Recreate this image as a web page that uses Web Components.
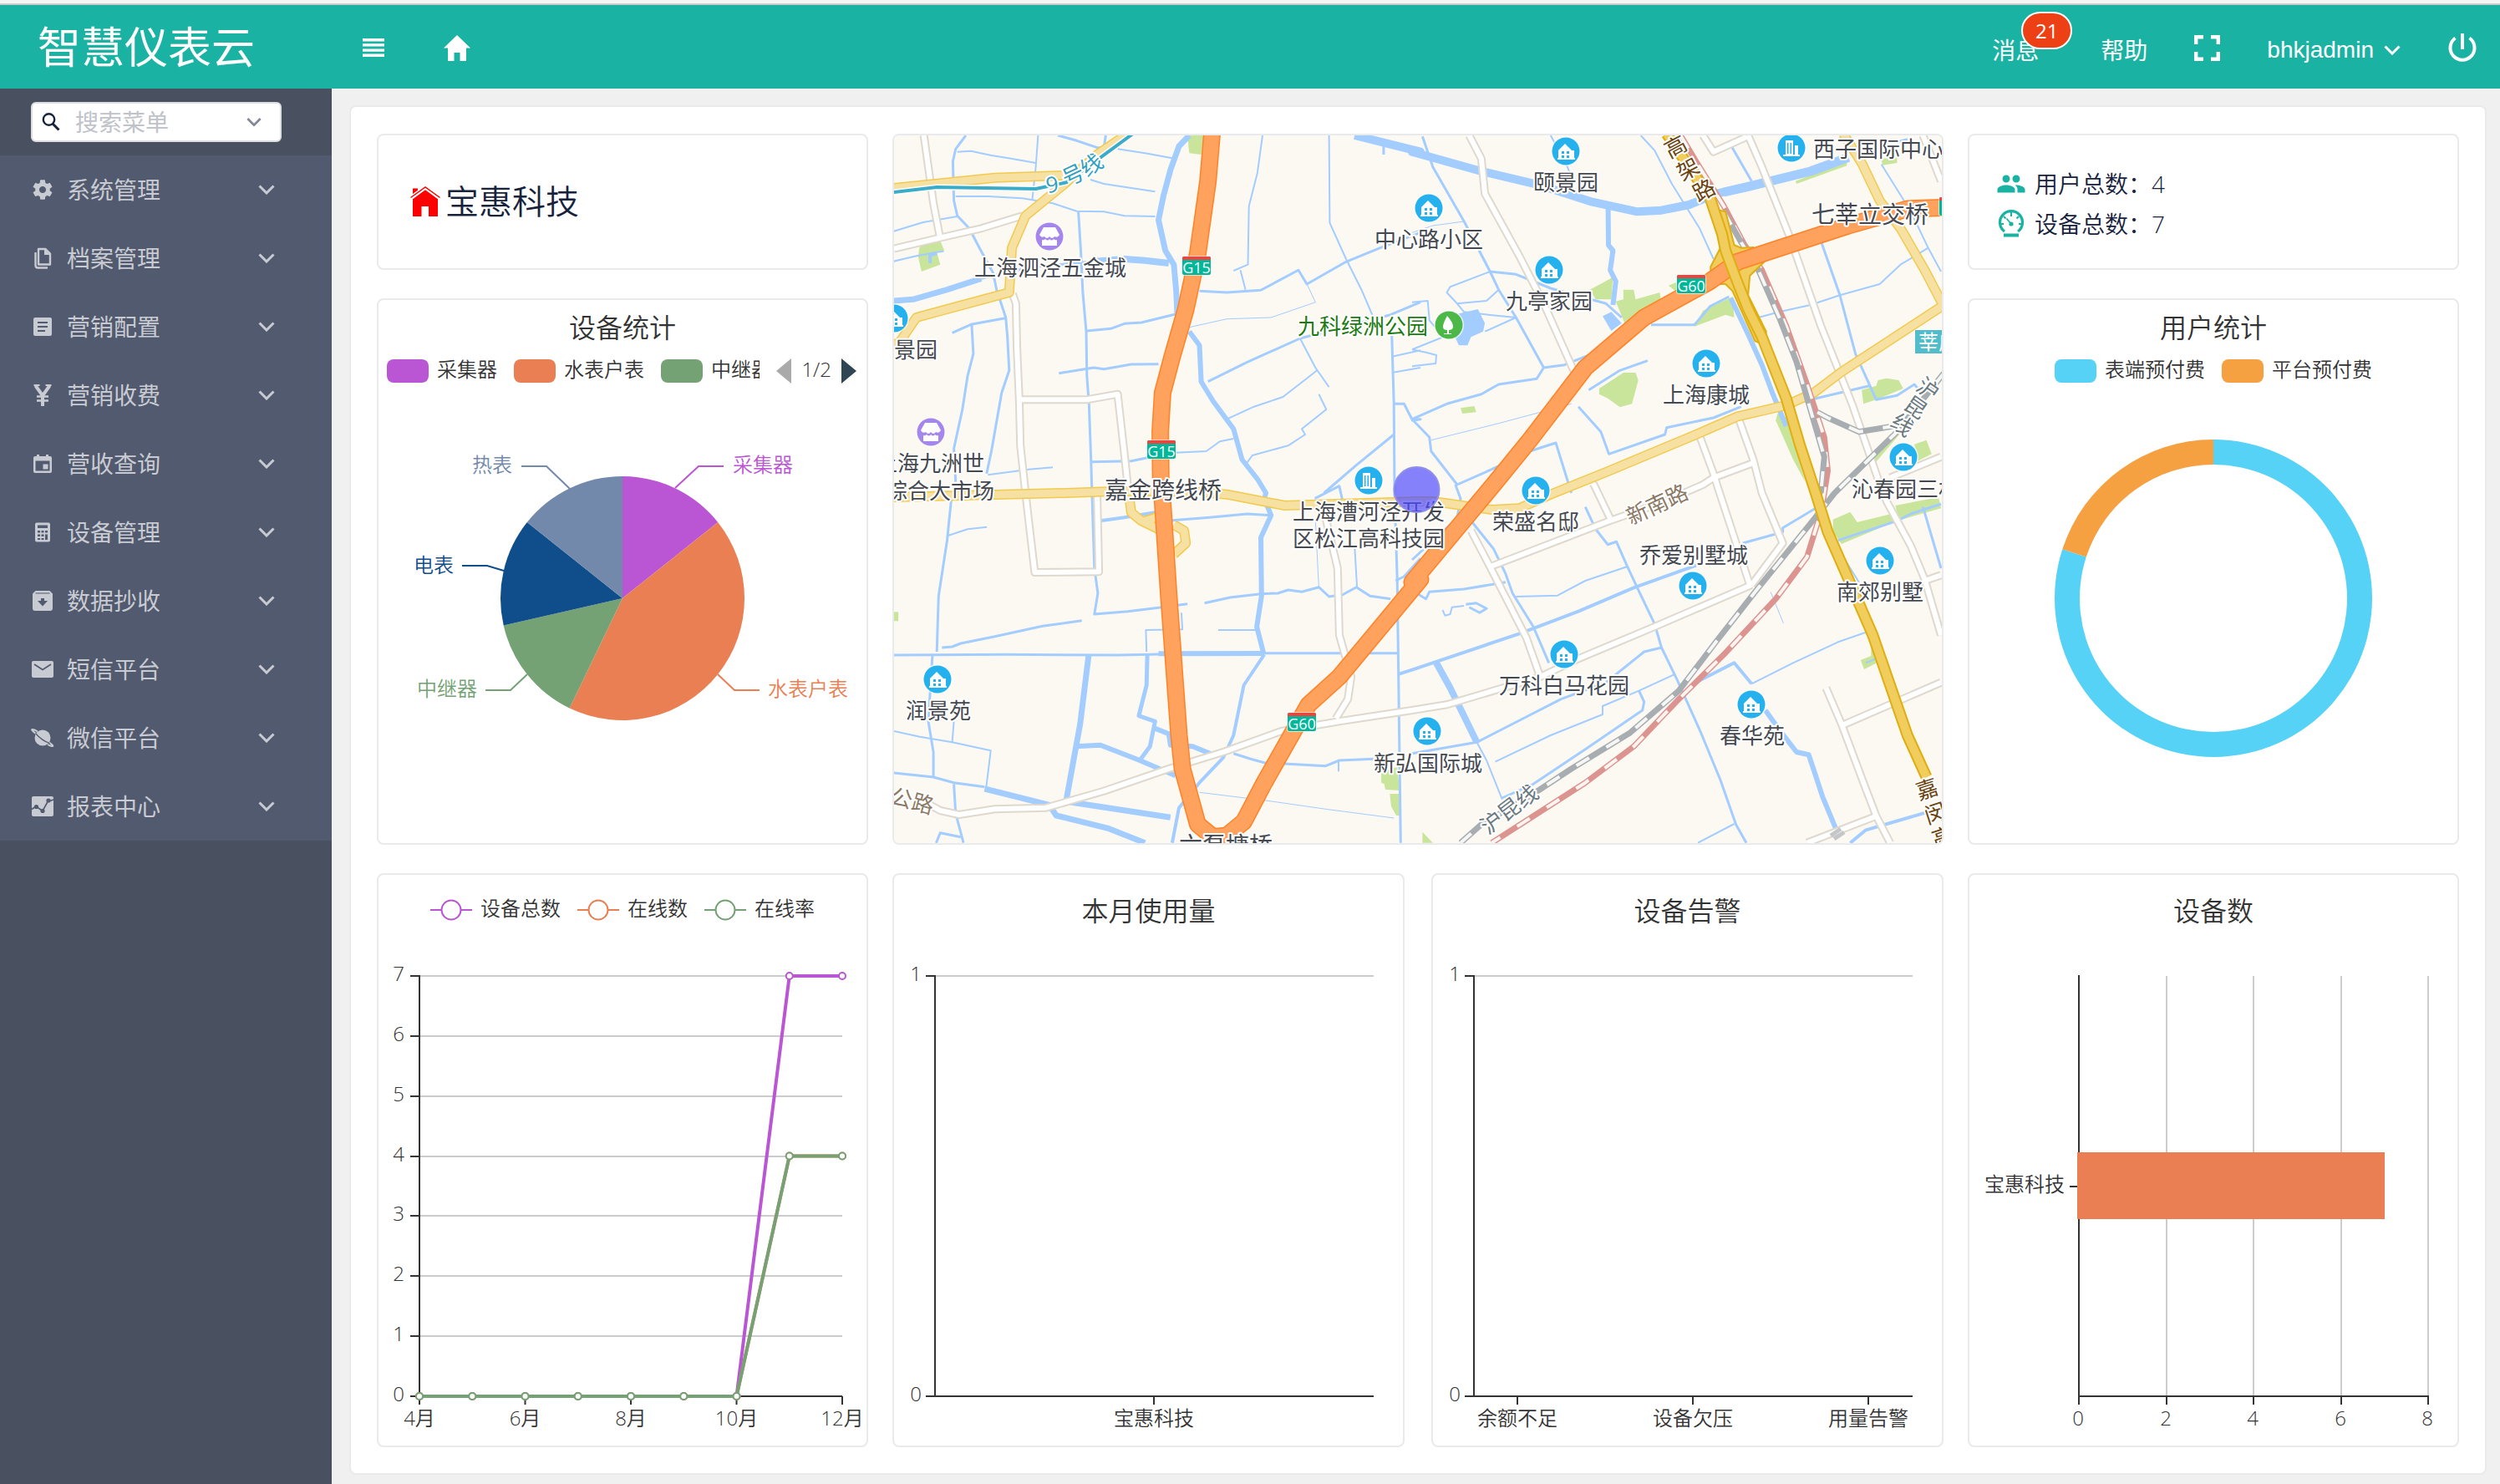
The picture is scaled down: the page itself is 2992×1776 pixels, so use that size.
<!DOCTYPE html>
<html lang="zh-CN">
<head>
<meta charset="utf-8">
<title>智慧仪表云</title>
<style>
  html, body { margin: 0; min-height: 100%; }
  body {
    background: #f0f0f0;
    color: #17233d;
    font-family: "Open Sans", "Noto Sans CJK SC", sans-serif;
    font-size: 28px;
    line-height: 40px;
  }
</style>
</head>
<body>
<meter-app></meter-app>

<script>
const define = (name, css, html, setup) => {
  const tpl = document.createElement('template');
  tpl.innerHTML = `<style>*{box-sizing:border-box}${css}</style>${html}`;
  customElements.define(name, class extends HTMLElement {
    constructor() {
      super();
      this.attachShadow({ mode: 'open' }).append(tpl.content.cloneNode(true));
    }
    connectedCallback() { if (setup) setup(this, this.shadowRoot); }
  });
};

/* ---------- icons ---------- */
const ICONS = {
  menu: ['0 0 26 22', '<path fill="currentColor" d="M0 0h26v3.4H0zM0 6.2h26v3.4H0zM0 12.4h26v3.4H0zM0 18.6h26V22H0z"/>'],
  home: ['0 0 32 31', '<path fill="currentColor" d="M16 0L32 15.5H27V31H19.5V21H12.5V31H5V15.5H0z"/>'],
  full: ['0 0 31 31', '<path fill="none" stroke="currentColor" stroke-width="4.4" d="M2.2 11V2.2H11M20 2.2h8.8V11M28.8 20v8.8H20M11 28.8H2.2V20"/>'],
  power: ['0 0 36 34', '<path fill="none" stroke="currentColor" stroke-width="4" d="M18 0v19"/><path fill="none" stroke="currentColor" stroke-width="4" d="M9.5 5.5A14.5 14.5 0 1 0 26.5 5.5"/>'],
  down: ['0 0 20 12', '<path fill="none" stroke="currentColor" stroke-width="3" d="M1.5 1.5L10 10L18.5 1.5"/>'],
  search: ['0 0 22 22', '<circle cx="8.5" cy="8" r="6.7" fill="none" stroke="currentColor" stroke-width="2.4"/><path d="M13 13L20.5 20.5" stroke="currentColor" stroke-width="3"/>'],
  gear: ['0 0 24 24', '<path fill="currentColor" d="M19.43 12.98c.04-.32.07-.64.07-.98s-.03-.66-.07-.98l2.11-1.65c.19-.15.24-.42.12-.64l-2-3.46c-.12-.22-.39-.3-.61-.22l-2.49 1c-.52-.4-1.08-.73-1.69-.98l-.38-2.65C14.46 2.18 14.25 2 14 2h-4c-.25 0-.46.18-.49.42l-.38 2.65c-.61.25-1.17.59-1.69.98l-2.49-1c-.23-.09-.49 0-.61.22l-2 3.46c-.13.22-.07.49.12.64l2.11 1.65c-.04.32-.07.65-.07.98s.03.66.07.98l-2.11 1.65c-.19.15-.24.42-.12.64l2 3.46c.12.22.39.3.61.22l2.49-1c.52.4 1.08.73 1.69.98l.38 2.65c.03.24.24.42.49.42h4c.25 0 .46-.18.49-.42l.38-2.65c.61-.25 1.17-.59 1.69-.98l2.49 1c.23.09.49 0 .61-.22l2-3.46c.12-.22.07-.49-.12-.64l-2.11-1.65zM12 15.5c-1.93 0-3.5-1.57-3.5-3.5s1.57-3.5 3.5-3.5 3.5 1.57 3.5 3.5-1.57 3.5-3.5 3.5z"/>'],
  copy: ['0 0 28 28', '<g fill="none" stroke="currentColor" stroke-width="2.4"><path d="M9 3h8.5L23 8.500v13H9z" stroke-linejoin="round"/><path d="M5.5 7v15.500q0 3 3 3H20"/></g><path fill="currentColor" d="M16 2.500l7.500 7.500H16z"/>'],
  article: ['0 0 28 28', '<path fill="currentColor" fill-rule="evenodd" d="M5 3h18q2 0 2 2v18q0 2-2 2H5q-2 0-2-2V5q0-2 2-2zM8 8v2h12V8zM8 13v2h12v-2zM8 18v2h9v-2z"/>'],
  yen: ['0 0 28 28', '<path fill="none" stroke="currentColor" stroke-width="4" d="M14 27V14M5.5 2.5L14 14.5L22.5 2.5"/><path fill="none" stroke="currentColor" stroke-width="2.6" d="M7 15.5h14M7 20.5h14"/><path stroke="currentColor" stroke-width="2" d="M3.5 2h7M17.5 2h7"/>'],
  calendar: ['0 0 28 28', '<path fill="currentColor" fill-rule="evenodd" d="M7 3h3v2h8V3h3v2h2q2 0 2 2v16q0 2-2 2H5q-2 0-2-2V7q0-2 2-2h2zM5.5 10.5v12h17v-12zM14.5 14.500h6v6h-6z"/>'],
  calc: ['0 0 28 28', '<path fill="currentColor" fill-rule="evenodd" d="M7 2.500h14q2 0 2 2v19q0 2-2 2H7q-2 0-2-2v-19q0-2 2-2zM8 5.500v3.500h12V5.500zM8 12v2.500h3V12zM12.500 12v2.500h3V12zM17 12v2.500h3V12zM8 16.500V19h3v-2.500zM12.500 16.500V19h3v-2.500zM17 16.500v6.500h3v-6.500zM8 21v2h3v-2zM12.500 21v2h3v-2z"/>'],
  archive: ['0 0 28 28', '<path fill="currentColor" fill-rule="evenodd" d="M5.500 2h17L26 5.500V23q0 3-3 3H5q-3 0-3-3V5.500zM5.500 4.500v1h17v-1zM12 11v3H8l6 6.500 6-6.500h-4v-3z"/>'],
  mail: ['0 0 28 28', '<rect x="1" y="4" width="26" height="20" rx="2" fill="currentColor"/><path d="M4 8l10 6.500L24 8" fill="none" stroke="#515a6e" stroke-width="1.8"/>'],
  planet: ['0 0 28 28', '<circle cx="14" cy="14" r="9.5" fill="currentColor"/><path d="M6 9C1 5 0 3.5 2.500 4Q4.500 4.300 8 6.500M22 19.500Q28.500 24.500 25 24Q23 23.700 20 22" fill="none" stroke="currentColor" stroke-width="2"/><path d="M5.500 8.500Q13 17.500 22.500 20.500" fill="none" stroke="#515a6e" stroke-width="1.2"/>'],
  trend: ['0 0 28 28', '<rect x="1" y="2" width="26" height="24" rx="2" fill="currentColor"/><path d="M1 17.500L6 14l8 5.500 6-11L27 6" fill="none" stroke="#515a6e" stroke-width="1.6"/><g fill="#515a6e"><circle cx="6.5" cy="14.5" r="2.6"/><circle cx="14" cy="19.5" r="2.6"/><circle cx="21" cy="7" r="2.6"/></g>'],
  house: ['0 0 36 36', '<path fill="red" d="M3 14L18 3.500L33 14V36H22V24H13.500V36H3z"/><path fill="red" d="M3 2.500h6v6L3 12.500z"/><path d="M.5 14L18 1.200L35.500 14" fill="none" stroke="#fff" stroke-width="5"/><path d="M.5 13.500L18 1L35.500 13.500" fill="none" stroke="red" stroke-width="1.5"/>'],
  people: ['0 0 24 24', '<path fill="currentColor" d="M16 11c1.66 0 2.99-1.34 2.99-3S17.66 5 16 5c-1.66 0-3 1.34-3 3s1.34 3 3 3zm-8 0c1.66 0 2.99-1.34 2.99-3S9.66 5 8 5C6.34 5 5 6.34 5 8s1.34 3 3 3zm0 2c-2.33 0-7 1.17-7 3.5V19h14v-2.5c0-2.33-4.67-3.5-7-3.5zm8 0c-.29 0-.62.02-.97.05 1.16.84 1.97 1.97 1.97 3.45V19h6v-2.5c0-2.33-4.67-3.5-7-3.5z"/>'],
  gauge: ['0 0 36 36', '<path d="M10 27A13.500 13.500 0 1 1 26 27" fill="none" stroke="currentColor" stroke-width="3.2"/><path d="M18 4v5M5 18h4M27 18h4M9 9l2.500 2.500M27 9l-2.500 2.500" stroke="currentColor" stroke-width="2"/><path d="M12.500 11.500L17.500 17.500" stroke="currentColor" stroke-width="1.8"/><circle cx="18" cy="18" r="2.6" fill="currentColor"/><path fill="currentColor" d="M9 29.500h18v4H9z"/>'],
  prev: ['0 0 18 30', '<path fill="#aaa" d="M18 0v30L0 15z"/>'],
  next: ['0 0 18 30', '<path fill="#2f4554" d="M0 0v30L18 15z"/>'],
};
customElements.define('ui-icon', class extends HTMLElement {
  static observedAttributes = ['name'];
  constructor() {
    super();
    this.attachShadow({ mode: 'open' }).innerHTML = '<style>:host{display:block;flex:none}svg{display:block;width:100%;height:100%}</style><svg aria-hidden="true"></svg>';
  }
  attributeChangedCallback(attr, old, value) {
    const [box, body] = ICONS[value];
    const svg = this.shadowRoot.querySelector('svg');
    svg.setAttribute('viewBox', box);
    svg.innerHTML = body;
  }
});

/* ---------- header ---------- */
define('app-header', `
  :host{display:block;border-top:4px solid #f5f5f5;background:#1ab3a3;color:#fff}
  .bar{display:flex;align-items:center;height:102px;border-top:2px solid #ccc}
  h1{margin:0;width:397px;padding-left:45px;font-size:52px;line-height:72px;font-weight:400;white-space:nowrap}
  button,a{font:inherit;color:inherit;background:none;border:0;padding:0;text-decoration:none;display:flex;align-items:center}
  .left{display:flex;align-items:center;gap:71px;padding:2px 0 0 37px}
  .right{display:flex;align-items:center;gap:56px;margin-left:auto;padding:2px 27px 0 0}
  .right .label{padding-top:6px}
  .msg{position:relative;margin-right:18px}
  .badge{position:absolute;left:35px;top:-20px;width:61px;height:45px;border:2px solid #fff;border-radius:23px;background:#ed4014;font-size:24px;line-height:41px;text-align:center}
  .user{gap:12px;font-family:"Liberation Sans",sans-serif}
  .i-menu{width:26px;height:22px}.i-home{width:32px;height:31px}.i-full{width:31px;height:31px}.i-power{width:36px;height:34px}.i-down{width:20px;height:12px}
`, `
  <header class="bar">
    <h1>智慧仪表云</h1>
    <div class="left">
      <button aria-label="折叠菜单"><ui-icon class="i-menu" name="menu"></ui-icon></button>
      <a href="#" aria-label="首页"><ui-icon class="i-home" name="home"></ui-icon></a>
    </div>
    <div class="right">
      <a href="#" class="label msg">消息<span class="badge">21</span></a>
      <a href="#" class="label">帮助</a>
      <button aria-label="全屏"><ui-icon class="i-full" name="full"></ui-icon></button>
      <button class="label user">bhkjadmin<ui-icon class="i-down" name="down"></ui-icon></button>
      <button aria-label="退出"><ui-icon class="i-power" name="power"></ui-icon></button>
    </div>
  </header>`);

/* ---------- sidebar ---------- */
define('menu-item', `
  :host{display:block}
  button{display:flex;align-items:center;gap:15px;width:100%;height:82px;padding:0 68px 0 37px;border:0;background:#515a6e;color:#c9cbd2;font:inherit;text-align:left}
  .lead{width:28px;height:28px}
  .text{flex:1}
  .tail{width:20px;height:12px}
`, `<button><ui-icon class="lead"></ui-icon><span class="text"><slot></slot></span><ui-icon class="tail" name="down"></ui-icon></button>`,
(el, root) => root.querySelector('.lead').setAttribute('name', el.getAttribute('icon')));

define('side-bar', `
  :host{display:block;width:397px;flex:none;background:#495060}
  .search{height:80px;padding:16px 60px 16px 37px}
  label{display:flex;align-items:center;gap:18px;height:48px;padding:0 22px 0 11px;background:#fff;border:2px solid #dcdee2;border-radius:6px;color:#17233d}
  input{flex:1;min-width:0;border:0;outline:0;padding:0;background:none;font:inherit;color:inherit}
  input::placeholder{color:#c0c3c9;opacity:1}
  .s{width:22px;height:22px}.d{width:18px;height:12px;color:#808695}
`, `
  <div class="search"><label><ui-icon class="s" name="search"></ui-icon><input type="text" placeholder="搜索菜单" aria-label="搜索菜单"><ui-icon class="d" name="down"></ui-icon></label></div>
  <nav>
    <menu-item icon="gear">系统管理</menu-item>
    <menu-item icon="copy">档案管理</menu-item>
    <menu-item icon="article">营销配置</menu-item>
    <menu-item icon="yen">营销收费</menu-item>
    <menu-item icon="calendar">营收查询</menu-item>
    <menu-item icon="calc">设备管理</menu-item>
    <menu-item icon="archive">数据抄收</menu-item>
    <menu-item icon="mail">短信平台</menu-item>
    <menu-item icon="planet">微信平台</menu-item>
    <menu-item icon="trend">报表中心</menu-item>
  </nav>`);

/* ---------- cards ---------- */
define('dash-card', `
  :host{display:flex;flex-direction:column;min-width:0;background:#fff;border:2px solid #e8eaec;border-radius:8px;overflow:hidden}
  ::slotted(h2){margin:0;font-size:32px;line-height:48px;font-weight:350;color:#333;text-align:center}
`, `<slot></slot>`);

define('company-card', `
  :host{display:flex;align-items:center;gap:6px;height:100%;padding:0 0 2px 38px;font-size:40px;line-height:56px;font-weight:350}
  ui-icon{width:36px;height:36px}
`, `<ui-icon name="house"></ui-icon><span><slot></slot></span>`);

define('stat-row', `
  :host{display:flex;align-items:center;gap:10px;height:48px;font-weight:350}
  ui-icon{width:36px;height:36px;color:#1ab3a3}
`, `<ui-icon></ui-icon><span><slot></slot></span>`,
(el, root) => root.querySelector('ui-icon').setAttribute('name', el.getAttribute('icon')));

/* Legend: items="name:colour,…"; line = hollow marker; pager shows "1/2" */
define('chart-legend', `
  :host{display:flex;align-items:center;justify-content:center;height:36px;font-size:24px;line-height:36px;font-weight:350;color:#333}
  .items{display:flex;gap:20px;overflow:hidden}
  :host([pager]) .items{flex:1;margin-left:10px}
  .item{display:flex;align-items:center;gap:10px;flex:none;white-space:nowrap}
  .swatch{width:50px;height:28px;border-radius:8px}
  svg{display:block;width:50px;height:28px}
  .text{padding-bottom:4px}
  .pager{display:none;align-items:center;gap:12px;margin:0 12px 0 20px}
  :host([pager]) .pager{display:flex}
  .pager button{border:0;padding:0;background:none}
  .pager ui-icon{width:18px;height:30px}
`, `<div class="items"></div><div class="pager"><button aria-label="上一页"><ui-icon name="prev"></ui-icon></button><span class="text">1/2</span><button aria-label="下一页"><ui-icon name="next"></ui-icon></button></div>`,
(el, root) => {
  const line = el.hasAttribute('line');
  root.querySelector('.items').innerHTML = el.getAttribute('items').split(',').map(s => {
    const [n, c] = s.split(':');
    const mark = line
      ? `<svg viewBox="0 0 50 28"><path d="M0 14h50" stroke="${c}" stroke-width="2"/><circle cx="25" cy="14" r="11.5" fill="#fff" stroke="${c}" stroke-width="2"/></svg>`
      : `<span class="swatch" style="background:${c}"></span>`;
    return `<span class="item">${mark}<span class="text">${n}</span></span>`;
  }).join('');
});

/* ---------- charts ---------- */
const CHART_CSS = ':host{display:block;font-weight:350}svg{display:block;width:100%}text{font-size:24px;fill:#333}';
const AXIS = 'stroke="#333" stroke-width="2" fill="none"';
const GRID = 'stroke="#ccc" stroke-width="2" fill="none"';
const txt = (x, y, s, anchor = 'middle', extra = '') => `<text x="${x}" y="${y + 9}" text-anchor="${anchor}" ${extra}>${s}</text>`;
const polar = (cx, cy, r, a) => { const t = a * 2 * Math.PI; return [cx + r * Math.sin(t), cy - r * Math.cos(t)]; };
const svgBox = (h, body) => `<svg viewBox="0 0 584 ${h}" role="img">${body}</svg>`;

define('device-pie', CHART_CSS, '<div></div>', (el, root) => {
  const cx = 292, cy = 254, r = 146;
  const parts = [['采集器', 1, '#ba55d3'], ['水表户表', 3, '#e97f52'], ['中继器', 1, '#74a274'], ['电表', 1, '#104e8b'], ['热表', 1, '#7289ab']];
  const leads = [['355,122 383,96 413,96', 424, 94, 'start'], ['406,345 426,364 456,364', 466, 362, 'start'], ['178,345 158,364 128,364', 118, 362, 'end'], ['150,221 130,215 100,215', 90, 214, 'end'], ['229,123 201,96 171,96', 160, 94, 'end']];
  let a = 0, out = '';
  parts.forEach(([n, v, c], i) => {
    const b = a + v / 7, p = polar(cx, cy, r, a), q = polar(cx, cy, r, b);
    out += `<path fill="${c}" d="M${cx} ${cy}L${p}A${r} ${r} 0 0 1 ${q}z"/>`;
    const [pts, x, y, anchor] = leads[i];
    out += `<polyline points="${pts}" fill="none" stroke="${c}" stroke-width="2"/>` + txt(x, y, n, anchor, `style="fill:${c}"`);
    a = b;
  });
  root.querySelector('div').innerHTML = svgBox(547, out);
});

define('user-donut', CHART_CSS, '<div></div>', (el, root) => {
  const cx = 292, cy = 254, R = 190, r = 160;
  const ring = (a, b, c) => {
    const big = b - a > .5 ? 1 : 0;
    return `<path fill="${c}" d="M${polar(cx, cy, R, a)}A${R} ${R} 0 ${big} 1 ${polar(cx, cy, R, b)}L${polar(cx, cy, r, b)}A${r} ${r} 0 ${big} 0 ${polar(cx, cy, r, a)}z"/>`;
  };
  root.querySelector('div').innerHTML = svgBox(547, ring(0, .8, '#57d2f7') + ring(.8, 1, '#f5a142'));
});

define('trend-chart', CHART_CSS, '<div></div>', (el, root) => {
  const x0 = 49, x1 = 555, y0 = 557, y1 = 54;
  const X = i => x0 + (x1 - x0) * i / 8, Y = v => y0 - (y0 - y1) * v / 7;
  let out = '';
  for (let v = 0; v <= 7; v++) {
    if (v) out += `<path ${GRID} d="M${x0} ${Math.round(Y(v))}H${x1}"/>`;
    out += `<path ${AXIS} d="M${x0 - 11} ${Math.round(Y(v))}H${x0}"/>` + txt(x0 - 18, Math.round(Y(v)) - 3, v, 'end');
  }
  out += `<path ${AXIS} d="M${x0} ${y1 - 1}V${y0 + 1}M${x0} ${y0}H${x1}"/>`;
  ['4月', '6月', '8月', '10月', '12月'].forEach((m, i) => { out += `<path ${AXIS} d="M${X(i * 2)} ${y0}v10"/>` + txt(X(i * 2), 583, m); });
  [[7, '#ba55d3'], [4, '#e97f52'], [4, '#74a274']].forEach(([top, c]) => {
    const pts = [0, 0, 0, 0, 0, 0, 0, top, top].map((v, i) => [X(i), Y(v)]);
    out += `<polyline points="${pts.join(' ')}" fill="none" stroke="${c}" stroke-width="4" stroke-linejoin="round"/>`;
    pts.forEach(p => { out += `<circle cx="${p[0]}" cy="${p[1]}" r="4" fill="#fff" stroke="${c}" stroke-width="2"/>`; });
  });
  root.querySelector('div').innerHTML = svgBox(616, out);
});

define('empty-bars', CHART_CSS, '<div></div>', (el, root) => {
  const x0 = 49, x1 = 574, y0 = 557, y1 = 54, cats = el.getAttribute('labels').split(',');
  let out = `<path ${GRID} d="M${x0} ${y1}H${x1}"/><path ${AXIS} d="M${x0} ${y1 - 1}V${y0}M${x0 - 11} ${y1}H${x0}M${x0 - 11} ${y0}H${x1}"/>`;
  out += txt(x0 - 16, y1 - 3, 1, 'end') + txt(x0 - 16, y0 - 3, 0, 'end');
  const ticks = cats.length === 1 ? [311] : [101, 311, 521];
  cats.forEach((c, i) => { out += `<path ${AXIS} d="M${ticks[i]} ${y0}v10"/>` + txt(ticks[i], 583, c); });
  root.querySelector('div').innerHTML = `<svg viewBox="0 0 609 616" role="img">${out}</svg>`;
});

define('count-bar', CHART_CSS, '<div></div>', (el, root) => {
  const x0 = 131, x1 = 549, y0 = 557, y1 = 54;
  let out = '';
  for (let i = 0; i <= 4; i++) {
    const x = Math.round(x0 + (x1 - x0) * i / 4);
    if (i) out += `<path ${GRID} d="M${x} ${y1}V${y0}"/>`;
    out += `<path ${AXIS} d="M${x} ${y0}v10"/>` + txt(x - 1, 583, i * 2);
  }
  out += `<path ${AXIS} d="M${x0} ${y1 - 1}V${y0}H${x1 + 1}M${x0 - 11} 306H${x0}"/>` + txt(x0 - 17, 303, '宝惠科技', 'end');
  out += '<rect x="129" y="265" width="368" height="80" fill="#e97f52"/>';
  root.querySelector('div').innerHTML = svgBox(616, out);
});

/* ---------- map ---------- */
/* Vector data is stored per tile; a letter switches the tile that the following points belong to. */
const TILES = { a: [-10, -12, 2.45], b: [620, -12, 2.4123], c: [-10, 418, 2.45], d: [620, 418, 2.4123] };
const geo = s => {
  let t = TILES.a;
  return s.trim().split(/\s+/).flatMap(k => {
    if (TILES[k]) { t = TILES[k]; return []; }
    const [x, y] = k.split(',').map(Number);
    return [`${(t[0] + x / t[2]).toFixed(1)},${(t[1] + y / 3).toFixed(1)}`];
  }).join(' ');
};
const WATER = [
  [3, 'a 235,36 205,85 197,130 200,270 210,325 245,370 275,440 315,530 325,590 352,690 357,760 362,880 340,960 310,1170 296,1250'],
  [2, 'a 24,380 110,348 210,327'], [2, 'a 210,95 250,92 310,108 360,118 440,135'], [2, 'a 447,36 440,150 430,265'],
  [2, 'a 205,255 300,255 400,262 490,280 560,308 640,310 700,325 790,327'], [3, 'a 505,36 560,55 620,80 640,80 645,36'],
  [3, 'a 565,310 572,450 578,600 588,740 590,900 596,1000 602,1200 605,1320 c 612,300 622,390 612,465 710,455 800,442 885,428'],
  [7, 'a 890,36 860,75 835,160 815,250 800,340 820,450 845,500 852,600 855,680'], [2, 'a 680,85 760,100 840,118'], [2, 'a 600,195 640,210 720,225 790,238'],
  [7, 'a 24,630 80,625 180,590 280,550'], [3, 'a 280,550 420,510 600,490'], [8, 'a 600,490 700,480 760,485 830,495'], [2, 'a 24,488 85,470 150,455 170,452'], [4, 'a 130,495 130,465 150,460'],
  [3, 'a 195,745 250,715 350,692'], [3, 'a 252,715 257,820 240,900 225,1020 200,1160 205,1280'], [3, 'a 590,738 660,730 700,712 750,708 850,678'],
  [3, 'a 508,890 610,870 640,875 720,858 800,857'], [3, 'a 605,1208 720,1205 780,1190 850,1170'], [2, 'a 850,1175 940,1170 980,1135 1020,1125'],
  [6, 'a 890,740 920,790 925,920 960,990 1020,1090 1045,1200 1090,1270 1115,1320 c 1110,50 1130,110 1100,190 1102,400 1088,510 1108,605'],
  [2, 'a 1105,36 1090,170 1065,290 1062,500 1020,522'], [2, 'a 1040,520 1055,590'], [3, 'a 920,595 1000,600 1100,592 1210,520 1235,570 1350,490 1450,440 1568,385'],
  [2, 'a 1300,36 1302,350 1350,480 1395,590 1430,690'], [1, 'a 1235,570 1260,635 1130,690 1000,695 890,725'], [3, 'a 945,920 1060,850 1215,765 1480,680 1568,635'],
  [2, 'a 1215,765 1260,870 1300,940'], [2, 'a 1000,1055 1080,1010 1165,975 1265,880'], [3, 'a 1484,750 1490,1000 1492,1320 c 1500,340 1503,640 1510,1286'],
  [3, 'a 1490,1000 1520,1000 1545,1060 1568,1055 b 0,1055'], [2, 'a 1270,965 1292,1020 1220,1090 1230,1110 1180,1150 1075,1185 1060,1210'], [2, 'a 1485,830 1568,808'], [2, 'a 1488,887 1568,870'],
  [10, 'a 1375,36 1568,95 b 0,95 200,165 370,215 520,275 650,310 720,305 800,285 880,245 970,220'], [11, 'b 900,240 970,220 1150,165 1260,115'],
  [2, 'a 300,1255 420,1235 490,1228'], [3, 'a 1490,1110 1380,1220 1285,1320'], [3, 'a 1460,75 1460,105'],
  [3, 'b 30,40 60,150 150,345 225,525 250,590 300,690 380,870'], [1, 'b 0,385 60,360 150,345'], [3, 'b 225,525 300,535 400,585 560,640 605,690'],
  [2, 'b 225,525 110,580 100,600 130,640 215,630 250,590'], [2, 'b 0,635 45,630 50,700 90,760 0,805'], [2, 'b 0,805 40,815 70,825 68,855 0,865'], [2, 'b 130,640 150,670 220,680 300,690 210,740'],
  [6, 'b 566,295 567,430 580,450 572,520 588,560 580,645'], [2, 'b 660,36 700,90 750,210 790,290 830,370 870,480'], [3, 'b 915,60 980,200'], [2, 'b 400,36 445,140 455,170'],
  [3, 'b 690,716 815,716 860,650 915,615'], [3, 'b 570,775 520,820 440,860 380,870 360,910 250,930 200,965 100,1000 0,1055'],
  [3, 'b 0,1055 50,1120 55,1170 130,1290 230,1235 340,1170 415,1140 460,1320'], [1, 'b 55,1130 250,1070 460,1000'], [3, 'b 510,950 600,880 680,845'],
  [3, 'b 480,1010 545,1100 568,1180 730,1110 735,1085 870,1050 950,1010'], [6, 'b 920,620 970,750 1010,860 1040,960 1080,1080'],
  [2, 'b 1000,690 1060,670 1150,645 1235,610 1350,570 1410,500 1490,440'], [3, 'b 1180,415 1235,610 1280,820 1340,985 1400,970 1450,930 1470,960'], [3, 'b 1100,1000 1320,935'],
  [2, 'b 1355,140 1440,310 1490,440 1527,525'], [3, 'b 1430,50 1400,60'],
  [3, 'c 192,56 180,200 155,400 150,600'], [2, 'c 183,183 240,160 297,152'], [3, 'c 165,585 195,582 220,570 320,545 460,508 575,488'], [3, 'c 24,612 350,610 680,612 950,605 1500,605'], [6, 'c 800,607 1110,606'],
  [3, 'c 137,615 130,750 125,850 140,960 140,1050'], [2, 'c 24,885 100,905 195,925 308,955 295,1085'], [3, 'c 24,1035 140,1050 200,1070 290,1085'], [2, 'c 195,925 200,850'],
  [7, 'c 290,1092 480,1150 500,1188 655,1235 760,1286'], [7, 'c 595,612 570,860 530,1130'], [7, 'c 530,1138 835,1195'], [6, 'c 555,940 630,935 745,990 850,1045'],
  [5, 'c 767,612 765,720 742,830 790,850 775,940 745,990'], [6, 'c 790,875 830,895 835,935 900,940 960,970'], [4, 'c 1110,610 1050,720 1020,900 990,980 920,1070 860,1160 840,1286'],
  [3, 'c 1020,965 1070,985 1110,998 1290,1010 1330,990 1430,985'], [2, 'c 1328,990 1328,1030'], [4, 'c 630,130 700,118 790,100'], [3, 'c 840,128 950,118 1060,105 1130,110'],
  [2, 'c 765,600 763,522 870,520 867,460'], [2, 'c 975,522 1090,522'], [3, 'c 935,425 1010,405 1100,392 1150,390 1180,378 1220,385 1270,368 1300,402 1340,395 1380,368 1420,400 1480,410'],
  [2, 'c 1375,220 1382,370'], [1, 'c 1260,130 1270,370'], [3, 'c 1495,345 1520,330 1568,265'], [3, 'c 1258,50 1330,5 1340,60'], [4, 'c 1505,680 1568,655 d 0,665 310,535 480,455 640,370 820,290'],
  [3, 'c 200,1075 205,1180 228,1286'], [3, 'c 148,1286 160,1250 220,1265'], [1, 'c 920,1105 1120,1135 1290,1165 1490,1197'],
  [8, 'd 70,640 110,730 187,925'], [3, 'd 0,965 187,925 320,840 430,770 560,710 670,600 720,585'],
  [3, 'd 500,80 530,160 565,215 590,205 620,290 650,370 700,500 720,585 765,700 830,880 890,1060 935,1220 965,1286'], [2, 'd 187,925 215,990 260,1130'],
  [2, 'd 240,995 400,900 550,825 550,795 655,740 760,680'], [3, 'd 260,1125 350,1075 500,950 665,810 670,780 655,740'], [3, 'd 170,130 235,230 270,320 290,390 350,510 395,640'],
  [2, 'd 300,402 420,398 500,345 620,295'], [3, 'd 0,380 40,410 50,385 150,375 270,350'], [2, 'd 88,450 95,470 110,465 115,440 150,435'], [3, 'd 155,430 185,425 215,445 195,460 165,440'],
  [4, 'd 820,710 930,640 980,715'], [6, 'd 1020,810 1060,880 1110,960 1145,970 1185,1120 1225,1240'], [2, 'd 980,715 1100,640 1230,565 1310,530'], [3, 'd 955,210 1070,170 1070,155 1165,85'],
  [3, 'd 1230,200 1340,155 1400,130 1440,105 1527,70'], [3, 'd 1475,80 1527,300'], [4, 'd 1265,1286 1310,1240 1490,1175'], [2, 'd 825,1286 930,1218'], [1, 'd 1035,385 1072,498'],
  [3, 'd 125,0 140,50 130,120 0,270'], [2, 'd 1200,170 1290,350'], [2, 'd 1310,640 1340,625'], [2, 'b 780,290 840,265'],
];
const LAKES = ['b 120,680 190,660 210,710 205,740 170,760 160,790 135,790 120,750', 'b 550,685 575,670 605,710 575,738'];
const GREEN = [
  'a 885,36 935,36 925,105 890,100', 'a 100,432 160,415 172,450 150,455 160,500 105,525 95,470', 'c 24,457 37,457 37,490 24,490',
  'c 1453,1030 1500,1015 1507,1098 1465,1095 1462,1075 1453,1070', 'c 1478,1110 1507,1110 1507,1188 1497,1188 1482,1155', 'd 30,1247 60,1286 30,1286',
  'd 1215,125 1265,98 1285,135 1400,100 1395,75 1520,45 1527,85 1400,130 1240,213 1215,170', 'd 1295,630 1325,615 1325,570 1342,640 1305,663',
  'b 513,590 580,545 575,625 530,625', 'b 588,632 610,625 610,590 640,590 645,625 715,600 720,640 670,720 615,715', 'b 740,575 770,560 765,600',
  'b 815,722 840,665 925,615 930,690 905,680', 'b 540,945 610,888 645,888 653,915 635,1000 600,1012 565,980 540,965', 'b 140,1015 180,1008 185,1030 145,1035',
  'b 1107,200 1255,128 1255,145 1110,210', 'b 1355,120 1400,115 1400,135 1358,143', 'b 1298,950 1340,935 1345,915 1370,908 1405,915 1418,945 1340,985 1303,1000',
  'b 1055,1035 1080,1050 1135,1280 1100,1200 1050,1060', 'b 1450,1145 1485,1130 1500,1180 1460,1205', 'b 1335,1215 1335,1190 1390,1110 1410,1105',
];
const STREETS = [
  'a 112,36 140,280 158,395', 'a 24,443 155,405 280,370 400,325', 'a 372,605 382,640 385,800 392,1000 395,1150 410,1320 c 437,315 625,313 620,40',
  'a 395,985 590,985 680,965 700,1180 712,1320', 'b 165,36 200,120 210,245 310,470 380,640 470,890', 'b 970,36 1010,150 1090,400 1180,720 1270,1000 1345,1270 d 1370,60 1440,220 1480,340 1527,540',
  'b 840,36 870,95 965,42', 'b 1475,36 1527,200', 'b 945,1060 985,1200 1010,1320 d 1070,210 980,360', 'b 830,1115 870,1250 d 880,0 975,360', 'b 990,1210 870,1265 d 840,0 720,65 570,130 225,295',
  'b 520,1285 d 525,0 575,130', 'd 170,165 225,295 330,550 370,690', 'd 980,360 700,510 480,625 370,690 100,790 0,810 c 1330,850 1160,885 990,960 830,1020 640,1100 470,1160 320,1165 215,1185 160,1170 130,1150',
  'c 1290,120 1325,300 1330,540 1365,690 1355,770 1320,840', 'd 1195,730 1240,860 1300,1060 1340,1190 1380,1286', 'd 1240,865 1527,710', 'd 1140,1286 1340,1190', 'd 1480,345 1527,325', 'b 1527,1190 1380,1265',
];
const YELLOW = [
  'a 24,225 320,188 520,180', 'a 710,30 620,105 520,215 410,325 370,440 362,600 150,670 90,690 40,780 20,790',
  'c 24,45 530,30 650,25 900,25 1000,35 1170,75 1568,60 d 0,60 60,60 230,90 310,85 400,35 b 560,1245 820,1110 940,1045 1080,1005 1160,960 1240,885 1535,645',
  'b 1245,30 1300,140 1350,270 1410,370 1480,520 1535,650', 'c 715,50 720,100 750,130 800,160', 'c 845,145 875,165 880,210 845,250', 'c 750,135 800,115',
];
const EXPRESS = ['b 735,30 860,260 895,390 905,450 935,550 970,660 1010,760 1080,980 1120,1150 1165,1320 d 1200,170 1260,340 1330,540 1430,900 1485,1050'];
const MOTORWAY = ['a 957,26 945,200 915,460 880,660 840,830 812,960 805,1100 807,1320 c 812,60 830,400 860,900 870,1020 915,1220 960,1265 1000,1260 1050,1210 1110,1070 1240,790 1330,690 1568,340 d 0,350 235,0 b 340,1130 500,870 670,690 860,560 940,490 1260,360 1430,300 1535,295'];
const RED_RAIL = 'b 775,36 820,130 900,290 960,430 1010,520 1080,720 1140,930 1190,1120 1200,1240 1190,1320 d 1180,100 1140,260 1050,410 900,610 770,770 640,940 500,1070 230,1286';
const GREY_RAIL = ['b 1535,890 1400,1100 1220,1320 d 1150,140 1000,370 880,560 770,740 630,890 460,1020 350,1110 200,1220 140,1286', 'b 900,310 950,420 1000,520 1060,690 1110,850 1145,1000 1190,1190 1180,1320', 'b 1170,1030 1200,1050 1290,1100 1390,1080'];

const line = (s, w, c, extra = '') => `<polyline points="${geo(s)}" fill="none" stroke="${c}" stroke-width="${w}" stroke-linejoin="round" ${extra}/>`;
const cased = (list, w, edge, fill, border) => list.map(s => line(s, w, edge)).join('') + list.map(s => line(s, w - border * 2, fill)).join('');
const area = (s, c, extra = '') => `<polygon points="${geo(s)}" fill="${c}" ${extra}/>`;

const GLYPH = {
  house: ['#24b1ee', '<path fill="#fff" d="M-9 -1L-1 -9L7 -1V8H-9z"/><path fill="#fff" d="M6 -1h4v9h1v2H-10V8H6z"/><path d="M-5 0h3v3h-3zM1 0h3v3h-3zM-5 5h3v3h-3zM1 5h3v3h-3z" fill="#24b1ee"/>'],
  tower: ['#24b1ee', '<path fill="#fff" d="M-7 -9h9V8h2V-3h4V8h2v2H-10V8h3z"/><path d="M-5 -6h1.500V7h-1.500zM-1.500 -6H0V7h-1.500z" fill="#24b1ee"/>'],
  shop: ['#a586ec', '<path fill="#fff" d="M-7 -11H7L12 -2Q10 2 6 0Q3 4 0 0Q-3 4 -6 0Q-10 2 -12 -2zM-9 4Q-7 5 -5 3Q-2 6 0 3Q3 6 5 3Q7 5 9 4V11H-9z"/>'],
  park: ['#4cb848', '<path fill="#fff" d="M-2 -11q8 9 7 14q-1 3-5 3v4h3v1h-9v-1h4V6q-5 0-5-4q0-4 5-13z"/>'],
};
const pin = (x, y, k) => `<g transform="translate(${x - 1070} ${y - 162})"><circle r="18" fill="#fff" opacity=".7"/><circle r="16.5" fill="${GLYPH[k][0]}"/>${GLYPH[k][1]}</g>`;
const name = (x, y, s, o = {}) => {
  const px = x - 1070, py = y - 162, size = o.size || 26;
  return `<text x="${px}" y="${py + 10}" text-anchor="${o.anchor || 'middle'}" font-size="${size}" fill="${o.fill || '#45494f'}"${o.turn ? ` transform="rotate(${o.turn} ${px} ${py})"` : ''}>${s}</text>`;
};
const shield = (x, y, s) => `<g transform="translate(${x - 1070} ${y - 162})"><rect x="-18" y="-12" width="36" height="24" rx="3" fill="#fff" opacity=".6"/><rect x="-17" y="-11" width="34" height="22" rx="2" fill="#00b79a"/><path d="M-17 -7v-2q0-2 2-2h30q2 0 2 2v2z" fill="#f5403c"/><text class="road" y="9" text-anchor="middle">${s}</text></g>`;

define('city-map', `
  :host{display:block;background:#fcf9f2}
  svg{display:block;width:100%}
  text{paint-order:stroke;stroke:#fff;stroke-width:4px;stroke-linejoin:round}
  text.road,text.metro{stroke:none;fill:#fff;font-size:18px}
  text.metro{font-size:24px}
`, '<div></div>', (el, root) => {
  const brown = { fill: '#6b4410' }, road = '#8c7a66', rail = '#6c7a80', teal = '#2f9fc0';
  root.querySelector('div').innerHTML = `<svg viewBox="0 0 1254 847" role="img"><rect width="1254" height="847" fill="#fcf9f2"/>`
    + GREEN.map(s => area(s, '#c9e59b')).join('')
    + WATER.map(([w, s]) => line(s, w, '#a3ccff')).join('') + LAKES.map(s => area(s, '#a3ccff')).join('')
    + cased(STREETS, 10, '#dfd9cd', '#fff', 2)
    + cased(YELLOW, 12, '#f2ca4e', '#f6e1a2', 1.5)
    + line('a 24,240 150,222 440,228 530,205 725,30', 7, '#fff') + line('a 24,240 150,222 440,228 530,205 725,30', 4, '#3bacc8')
    + line(RED_RAIL, 7, '#dc9490') + line(RED_RAIL, 4, '#fcf4f0', 'stroke-dasharray="18 24"')
    + GREY_RAIL.map(s => line(s, 7, '#a7adb0') + line(s, 4, '#f6f6f4', 'stroke-dasharray="18 24"')).join('')
    + area('b 862,508 890,440 885,360 870,300 905,310 930,430 950,440 985,438 1025,480 975,540 970,610 1022,740 1020,790 990,775 925,595 905,570 862,570', '#f0cd5c', 'stroke="#dfae10" stroke-width="2"')
    + cased(MOTORWAY, 21, '#ff8226', '#ffa25e', 1.5)
    + cased(EXPRESS, 14, '#dfae10', '#f0cd5c', 2)
    + '<path d="M1121 838l12-8M1125 842l12-8" stroke="#c4c6c8" stroke-width="5"/>'
    + shield(1432, 318, 'G15') + shield(1390, 538, 'G15') + shield(2024, 340, 'G60') + shield(1558, 864, 'G60') + shield(2338, 247, '')
    + '<path fill="#52bccb" d="M1222 233h32v28h-32z"/><text class="metro" x="1226" y="256">莘庄</text>'
    + pin(1256, 283, 'shop') + pin(1114, 517, 'shop') + pin(1070, 381, 'house') + pin(1710, 249, 'house') + pin(1874, 181, 'house')
    + pin(1854, 323, 'house') + pin(2042, 435, 'house') + pin(2144, 177, 'tower') + pin(1638, 575, 'tower') + pin(1734, 389, 'park')
    + pin(2278, 547, 'house') + pin(1838, 587, 'house') + pin(2026, 701, 'house') + pin(2250, 671, 'house') + pin(1872, 783, 'house')
    + pin(2096, 843, 'house') + pin(1708, 875, 'house') + pin(1122, 813, 'house')
    + name(1257, 320, '上海泗泾五金城') + name(1096, 418, '景园') + name(1178, 554, '上海九洲世', { anchor: 'end' }) + name(1190, 587, '综合大市场', { anchor: 'end' })
    + name(1392, 587, '嘉金跨线桥', { size: 28 }) + name(1638, 612, '上海漕河泾开发') + name(1638, 644, '区松江高科技园') + name(1631, 390, '九科绿洲公园', { fill: '#1c7a12' })
    + name(1710, 286, '中心路小区') + name(1874, 218, '颐景园') + name(1854, 360, '九亭家园') + name(2042, 472, '上海康城') + name(2170, 178, '西子国际中心', { anchor: 'start' })
    + name(2238, 257, '七莘立交桥', { size: 28 }) + name(2216, 585, '沁春园三村', { anchor: 'start' }) + name(1838, 624, '荣盛名邸') + name(1983, 603, '新南路', { fill: road, turn: -25 })
    + name(2027, 664, '乔爱别墅城') + name(2250, 708, '南郊别墅') + name(1872, 820, '万科白马花园') + name(2097, 880, '春华苑') + name(1709, 913, '新弘国际城')
    + name(1123, 850, '润景苑') + name(1092, 958, '公路', { fill: road, turn: 15 }) + name(1467, 1012, '六磊塘桥', { size: 28 }) + name(1806, 968, '沪昆线', { fill: rail, turn: -37 })
    + name(2308, 465, '沪', { fill: rail, turn: 35 }) + name(2293, 487, '昆', { fill: rail, turn: 35 }) + name(2277, 508, '线', { fill: rail, turn: 35 })
    + name(2306, 944, '嘉', { ...brown, turn: -18 }) + name(2316, 973, '闵', { ...brown, turn: -18 }) + name(2325, 1001, '高', { ...brown, turn: -18 })
    + name(1990, 148, '线', { ...brown, turn: -28 }) + name(2005, 175, '高', { ...brown, turn: -28 }) + name(2020, 202, '架', { ...brown, turn: -28 }) + name(2039, 227, '路', { ...brown, turn: -28 })
    + name(1259, 220, '9', { fill: teal, turn: -10 }) + name(1284, 209, '号', { fill: teal, turn: -25 }) + name(1306, 197, '线', { fill: teal, turn: -35 })
    + '<circle cx="625.5" cy="424" r="27" fill="#4b48ff" fill-opacity=".68" stroke="#8f8fe8" stroke-width="2"/></svg>';
});

/* ---------- page ---------- */
define('dash-board', `
  :host{display:grid;grid-template-columns:588fr 1258fr 588fr;column-gap:29px;row-gap:34px;grid-template-rows:163px auto auto;
    margin:20px 16px 11px 21px;padding:32px 31px 31px;background:#fff;border:2px solid #e8eaec;border-radius:8px;flex:1;min-width:0;align-content:start}
  .map{grid-row:1 / 3;grid-column:2}
  .c1{grid-column:1}.c3{grid-column:3}
  .r1{grid-row:1}.r2{grid-row:2}
  .pair{display:grid;grid-template-columns:1fr 1fr;gap:32px}
  .top{padding-top:9px}
  .low{padding-top:19px}
  .top chart-legend{margin-top:10px}
  .low chart-legend{margin:5px 0 7px}
  .stats{justify-content:center;padding:4px 0 0 32px}
`, `
  <dash-card class="c1 r1"><company-card>宝惠科技</company-card></dash-card>
  <dash-card class="c1 r2 top"><h2>设备统计</h2><chart-legend pager items="采集器:#ba55d3,水表户表:#e97f52,中继器:#74a274"></chart-legend><device-pie></device-pie></dash-card>
  <dash-card class="map"><city-map></city-map></dash-card>
  <dash-card class="c3 r1 stats"><stat-row icon="people">用户总数：4</stat-row><stat-row icon="gauge">设备总数：7</stat-row></dash-card>
  <dash-card class="c3 r2 top"><h2>用户统计</h2><chart-legend items="表端预付费:#57d2f7,平台预付费:#f5a142"></chart-legend><user-donut></user-donut></dash-card>
  <dash-card class="low"><chart-legend line items="设备总数:#ba55d3,在线数:#e97f52,在线率:#74a274"></chart-legend><trend-chart></trend-chart></dash-card>
  <div class="pair">
    <dash-card class="low"><h2>本月使用量</h2><empty-bars labels="宝惠科技"></empty-bars></dash-card>
    <dash-card class="low"><h2>设备告警</h2><empty-bars labels="余额不足,设备欠压,用量告警"></empty-bars></dash-card>
  </div>
  <dash-card class="low"><h2>设备数</h2><count-bar></count-bar></dash-card>`);

define('meter-app', `
  :host{display:flex;flex-direction:column;min-height:100vh}
  .body{display:flex;flex:1}
`, `<app-header></app-header><div class="body"><side-bar></side-bar><dash-board></dash-board></div>`);
</script>
</body>
</html>
